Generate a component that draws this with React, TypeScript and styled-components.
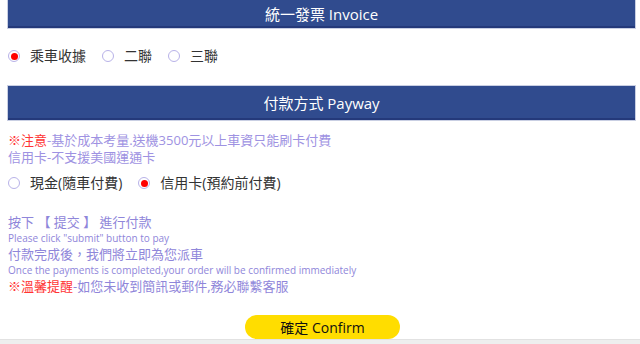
import React, { useState } from 'react';
import styled, { createGlobalStyle } from 'styled-components';

const GlobalStyle = createGlobalStyle`
  body {
    margin: 0;
    background: #fff;
    font-family: "Open Sans", "Noto Sans CJK TC", sans-serif;
  }
`;

const Page = styled.div`
  width: 640px;
  height: 344px;
  overflow: hidden;
  display: flex;
  flex-direction: column;
`;

const Content = styled.div`
  padding: 0 5px 0 8px;
  flex: 1;
`;

const SectionTitle = styled.div<{ $height: number }>`
  height: ${({ $height }) => $height}px;
  background: #304b8e;
  border-bottom: 2px solid #24397a;
  box-shadow: 0 0 0 1px #c9cfe3;
  color: #fff;
  font-size: 15px;
  display: flex;
  align-items: center;
  justify-content: center;
  box-sizing: border-box;
`;

const RadioRow = styled.div<{ $pad: string }>`
  display: flex;
  align-items: center;
  gap: 16px;
  padding: ${({ $pad }) => $pad};
`;

const RadioLabel = styled.label`
  display: flex;
  align-items: center;
  gap: 10px;
  font-size: 14px;
  color: #333;
  cursor: pointer;
  line-height: 20px;
`;

const RadioDot = styled.span<{ $checked: boolean }>`
  width: 12px;
  height: 12px;
  border-radius: 50%;
  border: 1px solid #b8b2e8;
  box-sizing: border-box;
  display: flex;
  align-items: center;
  justify-content: center;
  &::after {
    content: '';
    width: 7px;
    height: 7px;
    border-radius: 50%;
    background: ${({ $checked }) => ($checked ? '#f00' : 'transparent')};
  }
`;

const Notice = styled.div`
  padding: 12px 0 0;
  font-size: 13px;
  line-height: 17px;
  color: #9e92e2;
`;

const Red = styled.span`
  color: #ff3434;
`;

const Guide = styled.div`
  padding: 21px 0 0;
  color: #8f86da;
`;

const GuideLine = styled.div<{ $small?: boolean }>`
  font-size: ${({ $small }) => ($small ? '10px' : '13px')};
  line-height: ${({ $small }) => ($small ? '15px' : '17px')};
`;

const ButtonWrap = styled.div`
  display: flex;
  justify-content: center;
  padding: 20px 0 0;
`;

const ConfirmButton = styled.button`
  width: 155px;
  height: 24px;
  border: none;
  border-radius: 12px;
  background: #ffdd00;
  color: #111;
  font-family: "Open Sans", "Noto Sans CJK TC", sans-serif;
  font-size: 14px;
  padding: 0;
  margin-left: 2px;
  cursor: pointer;
`;

const BottomBar = styled.div`
  height: 5px;
  background: #eeeeee;
  border-top: 1px solid #e2e2e2;
`;

interface RadioProps {
  label: string;
  checked: boolean;
  onSelect: () => void;
}

const Radio: React.FC<RadioProps> = ({ label, checked, onSelect }) => (
  <RadioLabel onClick={onSelect}>
    <RadioDot $checked={checked} />
    {label}
  </RadioLabel>
);

const invoiceOptions = ['乘車收據', '二聯', '三聯'];
const payOptions = ['現金(隨車付費)', '信用卡(預約前付費)'];

export default function App() {
  const [invoice, setInvoice] = useState(0);
  const [pay, setPay] = useState(1);

  return (
    <Page lang="zh-TW">
      <GlobalStyle />
      <Content>
        <SectionTitle $height={28}>統一發票 Invoice</SectionTitle>
        <RadioRow $pad="18px 0 20px 0">
          {invoiceOptions.map((o, i) => (
            <Radio key={o} label={o} checked={invoice === i} onSelect={() => setInvoice(i)} />
          ))}
        </RadioRow>
        <SectionTitle $height={34}>付款方式 Payway</SectionTitle>
        <Notice>
          <Red>※注意</Red>-基於成本考量.送機3500元以上車資只能刷卡付費
          <br />
          信用卡-不支援美國運通卡
        </Notice>
        <RadioRow $pad="7px 0 0 0">
          {payOptions.map((o, i) => (
            <Radio key={o} label={o} checked={pay === i} onSelect={() => setPay(i)} />
          ))}
        </RadioRow>
        <Guide>
          <GuideLine>按下 【 提交 】 進行付款</GuideLine>
          <GuideLine $small>Please click "submit" button to pay</GuideLine>
          <GuideLine>付款完成後，我們將立即為您派車</GuideLine>
          <GuideLine $small>Once the payments is completed,your order will be confirmed immediately</GuideLine>
          <GuideLine>
            <Red>※溫馨提醒</Red>-如您未收到簡訊或郵件,務必聯繫客服
          </GuideLine>
        </Guide>
        <ButtonWrap>
          <ConfirmButton>確定 Confirm</ConfirmButton>
        </ButtonWrap>
      </Content>
      <BottomBar />
    </Page>
  );
}
